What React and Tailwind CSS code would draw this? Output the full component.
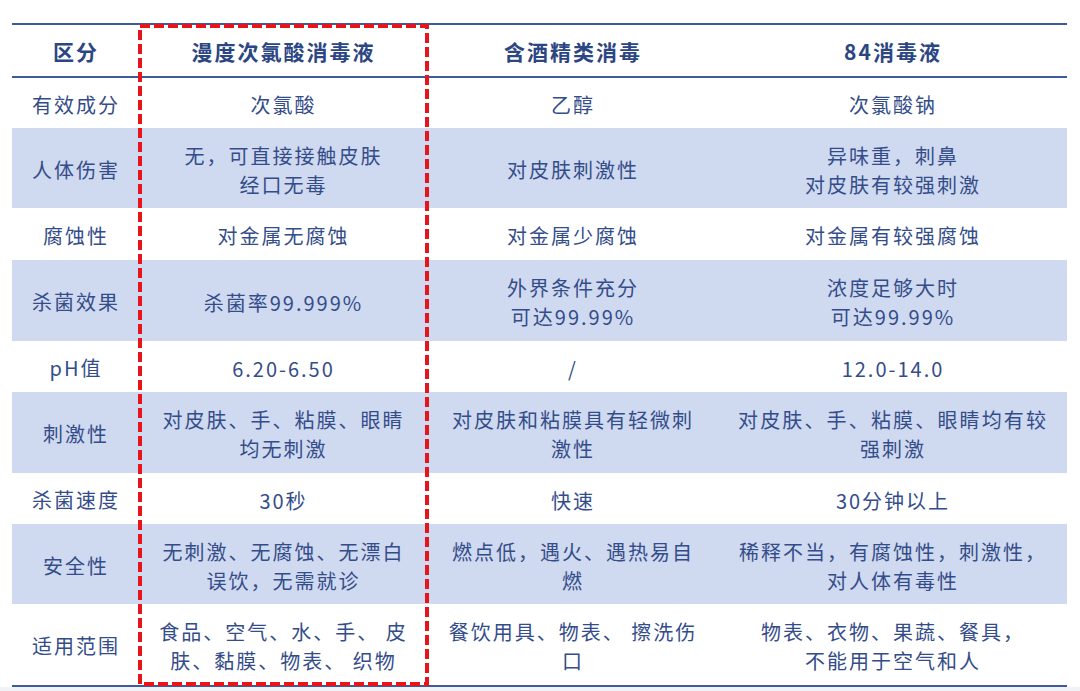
import React from "react";

const J = (text, w) => ({ text, w });

const rows = [
  { label: "有效成分", h: "h-[50px]", cells: [["次氯酸"], ["乙醇"], ["次氯酸钠"]] },
  {
    label: "人体伤害",
    h: "h-[80px]",
    blue: true,
    cells: [["无，可直接接触皮肤", "经口无毒"], ["对皮肤刺激性"], ["异味重，刺鼻", "对皮肤有较强刺激"]],
  },
  { label: "腐蚀性", h: "h-[52px]", cells: [["对金属无腐蚀"], ["对金属少腐蚀"], ["对金属有较强腐蚀"]] },
  {
    label: "杀菌效果",
    h: "h-[81px]",
    blue: true,
    cells: [["杀菌率99.999%"], ["外界条件充分", "可达99.99%"], ["浓度足够大时", "可达99.99%"]],
  },
  { label: "pH值", h: "h-[51px]", cells: [["6.20-6.50"], ["/"], ["12.0-14.0"]] },
  {
    label: "刺激性",
    h: "h-[81px]",
    blue: true,
    cells: [
      [J("对皮肤、手、粘膜、眼睛", "w-[242px]"), "均无刺激"],
      ["对皮肤和粘膜具有轻微刺", "激性"],
      [J("对皮肤、手、粘膜、眼睛均有较", "w-[310px]"), "强刺激"],
    ],
  },
  { label: "杀菌速度", h: "h-[51px]", cells: [["30秒"], ["快速"], ["30分钟以上"]] },
  {
    label: "安全性",
    h: "h-[80px]",
    blue: true,
    cells: [
      ["无刺激、无腐蚀、无漂白", "误饮，无需就诊"],
      ["燃点低，遇火、遇热易自", "燃"],
      ["稀释不当，有腐蚀性，刺激性，", "对人体有毒性"],
    ],
  },
  {
    label: "适用范围",
    h: "h-[81px]",
    cells: [
      ["食品、空气、水、手、 皮", "肤、黏膜、物表、 织物"],
      ["餐饮用具、物表、 擦洗伤", "口"],
      ["物表、衣物、果蔬、餐具，", "不能用于空气和人"],
    ],
  },
];

const grid = "grid grid-cols-[128px_287px_292px_348px]";

function Cell({ lines }) {
  return (
    <div className="flex flex-col items-center justify-center pt-[3px] text-center leading-[29px]">
      {lines.map((l, i) =>
        typeof l === "string" ? (
          <div key={i} className="whitespace-pre">{l}</div>
        ) : (
          // this line is spread to the full width in the original
          <div key={i} className={`${l.w} text-justify [text-align-last:justify]`}>{l.text}</div>
        )
      )}
    </div>
  );
}

export default function App() {
  return (
    <div
      className="w-[1080px] h-[691px] bg-white flex flex-col"
      style={{ fontFamily: '"Noto Sans CJK SC", "Noto Sans", sans-serif' }}
    >
      <div className="pt-[23px] pl-[12px] flex-1">
        <div className="relative w-[1055px] text-[20px] tracking-[2px] text-[#344d8a]">
          {/* header */}
          <div className={`${grid} h-[55px] border-t-2 border-b-2 border-[#3d5a9c] text-[21px] font-bold text-[#2b4683]`}>
            {["区分", "漫度次氯酸消毒液", "含酒精类消毒", "84消毒液"].map((t) => (
              <div key={t} className="flex items-center justify-center pt-[3px]">{t}</div>
            ))}
          </div>

          {rows.map((r) => (
            <div key={r.label} className={`${grid} ${r.h} ${r.blue ? "bg-[#cfd9ef]" : ""}`}>
              <div className="flex items-center justify-center pt-[3px]">{r.label}</div>
              {r.cells.map((c, i) => (
                <Cell key={i} lines={c} />
              ))}
            </div>
          ))}
          <div className="h-[2px] bg-[#3d5a9c]" />

          {/* red dashed highlight */}
          <svg className="absolute left-[126px] top-0 pointer-events-none" width="291" height="664">
            <rect x="2" y="3" width="287" height="658" fill="none" stroke="#e8141b" strokeWidth="4" strokeDasharray="10 4" />
          </svg>
        </div>
      </div>
      <div className="h-[4px] bg-[#f1f2f5]" />
    </div>
  );
}
